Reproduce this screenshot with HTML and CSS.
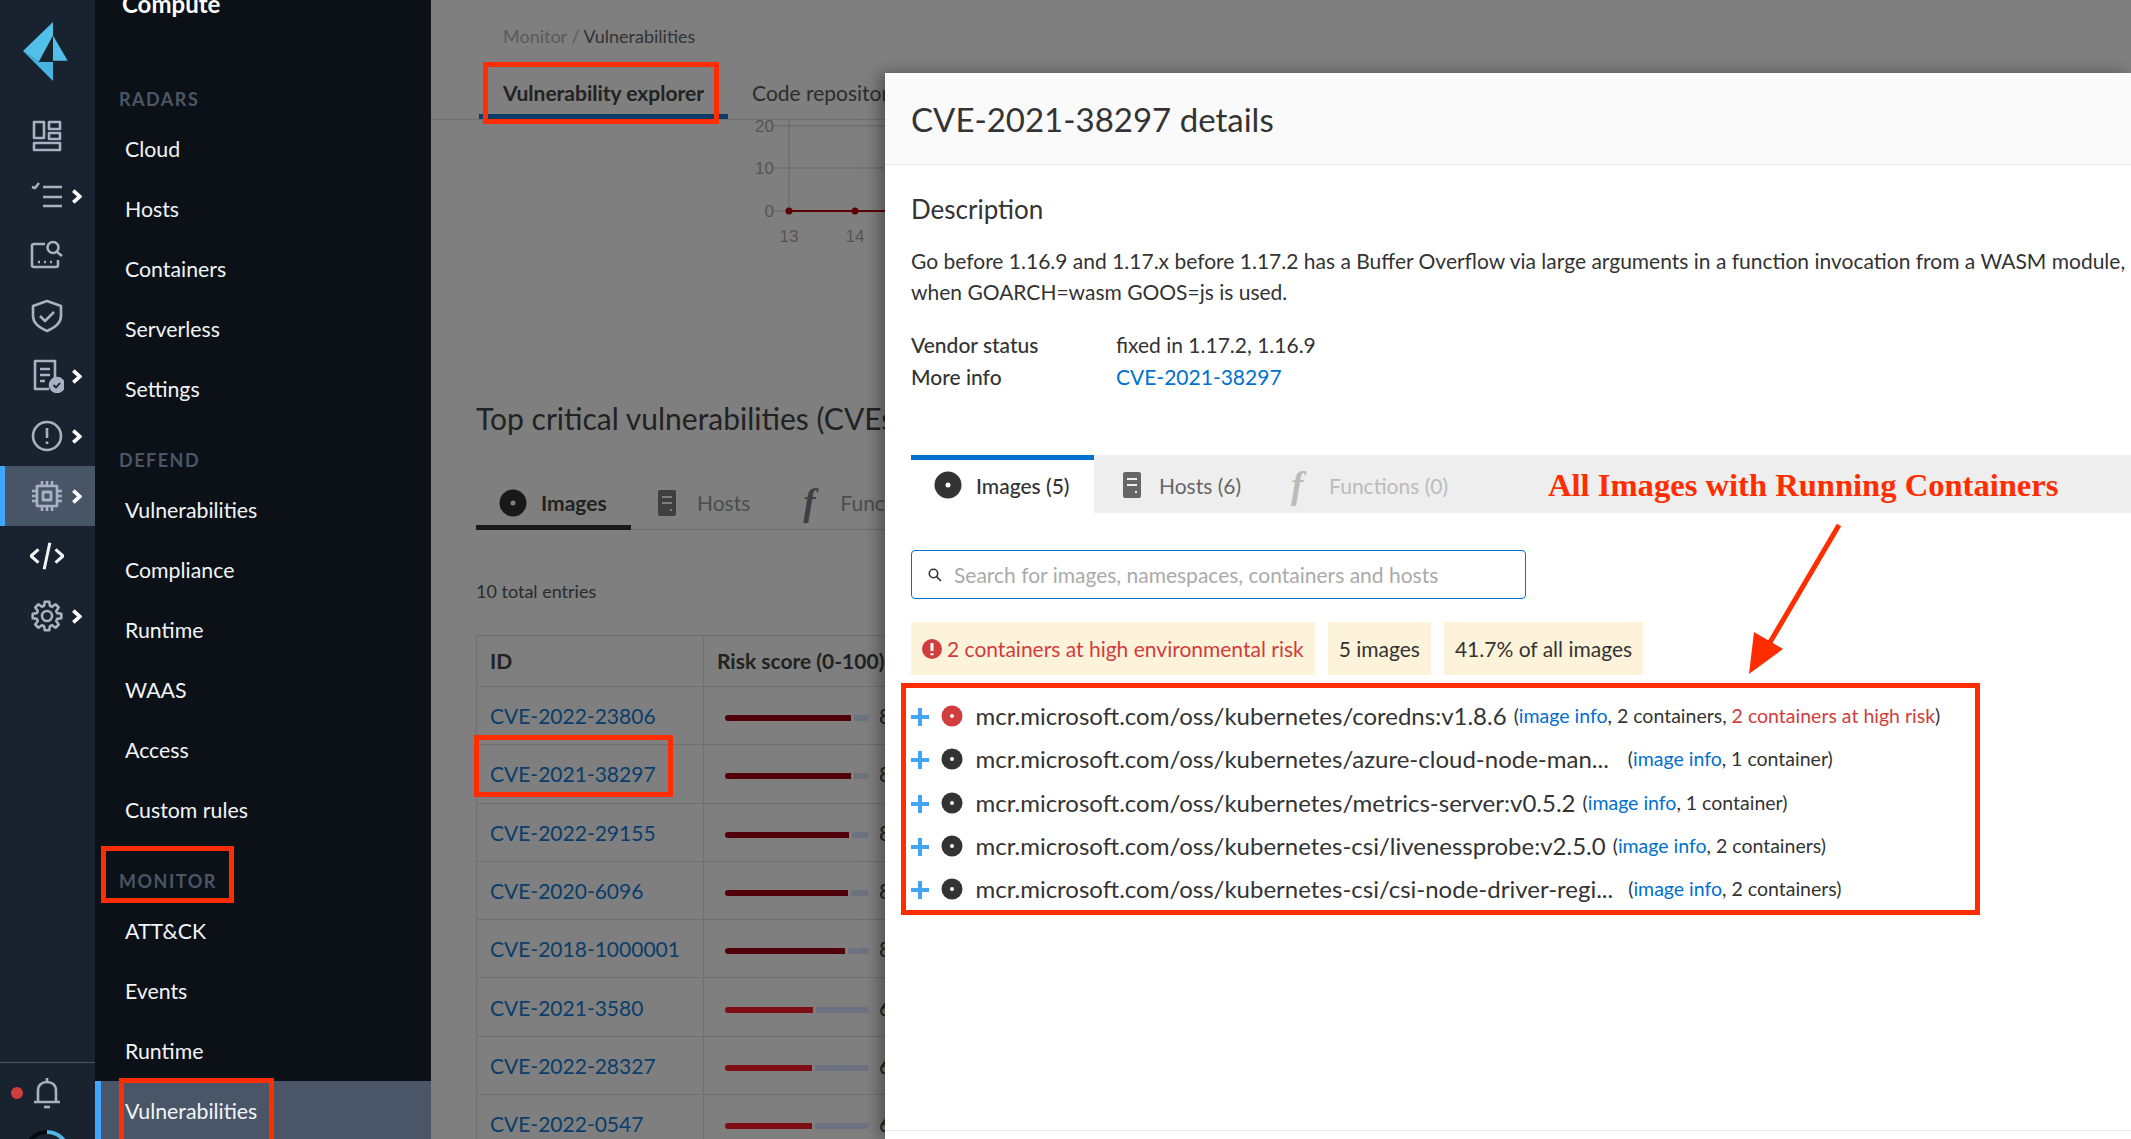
FILE: index.html
```html
<!doctype html>
<html lang="en">

<head>
	<meta charset="UTF-8">
	<title>CVE-2021-38297 details</title>
	<link rel="stylesheet" href="styles.css">
</head>

<body>
	<div class="rail">
		<svg class="logo" width="45" height="59" viewBox="0 0 45 59">
			<polygon points="30,0 0,29 15.7,40 30,13.5" fill="#52bfe8" />
			<polygon points="0,29 15.7,40 30,40 30,59" fill="#45b4e0" />
			<polygon points="30,13.5 44.7,38.7 30,38.7" fill="#52bfe8" />
		</svg>
		<div class="rail-row">
			<svg class="rail-icon" viewBox="0 0 34 34">
				<rect x="4" y="3" width="10" height="16" />
				<rect x="19" y="3" width="11" height="7" />
				<rect x="19" y="14" width="11" height="6" />
				<rect x="4" y="24" width="26" height="7" />
			</svg>
		</div>
		<div class="rail-row">
			<svg class="rail-icon" viewBox="0 0 34 34">
				<path d="M2 8l3 1 4-5M13 8h19M13 18h19M13 27h19" />
			</svg>
			<svg class="chevron" viewBox="0 0 10 14"><path d="M2 1.5L8 7l-6 5.5" /></svg>
		</div>
		<div class="rail-row">
			<svg class="rail-icon" viewBox="0 0 34 34">
				<path d="M15 5H4a2 2 0 0 0-2 2v19a2 2 0 0 0 2 2h22a2 2 0 0 0 2-2v-5M8 23h2M14 23h2M20 23h2" />
				<circle cx="23" cy="8.5" r="5.5" />
				<path d="M27 13l5 4" />
			</svg>
		</div>
		<div class="rail-row">
			<svg class="rail-icon" viewBox="0 0 34 34">
				<path d="M17 2l14 5v10c0 8-7 12-14 15C10 29 3 25 3 17V7z" />
				<path d="M10 17l5 5 9-9" />
			</svg>
		</div>
		<div class="rail-row">
			<svg class="rail-icon" viewBox="0 0 34 34">
				<path d="M19 30H5V2h20v18M10 10h10M10 16h10M10 22h5" />
				<circle class="solid" cx="27" cy="26" r="7" />
				<path class="tick" d="M23.5 26l2.5 2.5 4-4.5" />
			</svg>
			<svg class="chevron" viewBox="0 0 10 14"><path d="M2 1.5L8 7l-6 5.5" /></svg>
		</div>
		<div class="rail-row">
			<svg class="rail-icon" viewBox="0 0 34 34">
				<circle cx="17" cy="17" r="14" />
				<path d="M17 9v10M17 22.5v2.5" />
			</svg>
			<svg class="chevron" viewBox="0 0 10 14"><path d="M2 1.5L8 7l-6 5.5" /></svg>
		</div>
		<div class="rail-row rail-row-active">
			<svg class="rail-icon" viewBox="0 0 34 34">
				<rect x="7" y="7" width="20" height="20" />
				<rect class="solid-outline" x="13" y="13" width="8" height="8" />
				<path d="M12 2v5M17 2v5M22 2v5M12 27v5M17 27v5M22 27v5M2 12h5M2 17h5M2 22h5M27 12h5M27 17h5M27 22h5" />
			</svg>
			<svg class="chevron" viewBox="0 0 10 14"><path d="M2 1.5L8 7l-6 5.5" /></svg>
		</div>
		<div class="rail-row">
			<svg class="rail-icon rail-icon-code" viewBox="0 0 36 34">
				<path d="M9 10l-8 7 8 7M27 10l8 7-8 7M21 3l-6 28" />
			</svg>
		</div>
		<div class="rail-row">
			<svg class="rail-icon" viewBox="0 0 34 34">
				<polygon points="27.09,14.11 31.32,14.73 31.32,19.27 27.09,19.89 26.18,22.09 28.73,25.52 25.52,28.73 22.09,26.18 19.89,27.09 19.27,31.32 14.73,31.32 14.11,27.09 11.91,26.18 8.48,28.73 5.27,25.52 7.82,22.09 6.91,19.89 2.68,19.27 2.68,14.73 6.91,14.11 7.82,11.91 5.27,8.48 8.48,5.27 11.91,7.82 14.11,6.91 14.73,2.68 19.27,2.68 19.89,6.91 22.09,7.82 25.52,5.27 28.73,8.48 26.18,11.91" />
				<circle cx="17" cy="17" r="5" />
			</svg>
			<svg class="chevron" viewBox="0 0 10 14"><path d="M2 1.5L8 7l-6 5.5" /></svg>
		</div>
		<div class="rail-foot">
			<div class="bell-row">
				<span class="bell-dot"></span>
				<svg class="rail-icon" viewBox="0 0 34 34">
					<path d="M8 26V15c0-6 4-9 9-9s9 3 9 9v11M4 26h26M17 2v4" />
					<path d="M14 31h6" />
				</svg>
			</div>
			<svg class="progress" width="50" height="50" viewBox="0 0 50 50">
				<circle cx="25" cy="25" r="21" />
				<path d="M25 4a21 21 0 0 1 21 21" />
			</svg>
		</div>
	</div>

	<div class="nav">
		<div class="nav-top">Compute</div>
		<div class="nav-title">RADARS</div>
		<a class="nav-item">Cloud</a>
		<a class="nav-item">Hosts</a>
		<a class="nav-item">Containers</a>
		<a class="nav-item">Serverless</a>
		<a class="nav-item">Settings</a>
		<div class="nav-title nav-title-gap">DEFEND</div>
		<a class="nav-item">Vulnerabilities</a>
		<a class="nav-item">Compliance</a>
		<a class="nav-item">Runtime</a>
		<a class="nav-item">WAAS</a>
		<a class="nav-item">Access</a>
		<a class="nav-item">Custom rules</a>
		<div class="nav-title nav-title-gap">MONITOR</div>
		<a class="nav-item">ATT&amp;CK</a>
		<a class="nav-item">Events</a>
		<a class="nav-item">Runtime</a>
		<a class="nav-item nav-item-active">Vulnerabilities</a>
	</div>

	<div class="main">
		<div class="breadcrumb">Monitor / <b>Vulnerabilities</b></div>
		<div class="page-tabs">
			<div class="page-tab page-tab-active">Vulnerability explorer</div>
			<div class="page-tab">Code repository</div>
		</div>

		<svg class="chart" width="454" height="128" viewBox="0 0 454 128">
			<path class="chart-grid" d="M358 0V91M343 6H454M343 48H454M343 91H358" />
			<path class="chart-line" d="M358 91H454" />
			<circle class="chart-dot" cx="358" cy="91" r="3.5" />
			<circle class="chart-dot" cx="424" cy="91" r="3.5" />
			<text class="chart-y" x="343" y="12">20</text>
			<text class="chart-y" x="343" y="54">10</text>
			<text class="chart-y" x="343" y="97">0</text>
			<text x="358" y="122">13</text>
			<text x="424" y="122">14</text>
		</svg>

		<h2 class="section-title">Top critical vulnerabilities (CVEs)</h2>

		<div class="sub-tabs">
			<div class="sub-tab sub-tab-active">
				<svg class="disc" viewBox="0 0 28 28"><circle cx="14" cy="14" r="13.5" /><circle class="disc-hole" cx="14" cy="14" r="2.5" /></svg>
				Images
			</div>
			<div class="sub-tab sub-tab-hosts">
				<svg class="server" viewBox="0 0 18 26"><path d="M2 0h14a2 2 0 0 1 2 2v22a2 2 0 0 1-2 2H2a2 2 0 0 1-2-2V2a2 2 0 0 1 2-2z" /><path class="server-cut" d="M4 6h10v2H4zM4 12h10v2H4zM12 19h2v2h-2z" /></svg>
				Hosts
			</div>
			<div class="sub-tab sub-tab-func">
				<span class="func-icon">f</span>
				Functions
			</div>
		</div>

		<div class="entries">10 total entries</div>

		<div class="cve-table">
			<div class="cve-row cve-head">
				<div class="cve-id">ID</div>
				<div class="cve-risk">Risk score (0-100)</div>
			</div>
			<div class="cve-row">
				<div class="cve-id"><a>CVE-2022-23806</a></div>
				<div class="cve-risk"><span class="bar"><span class="fill fill-dark" style="width:126px"></span><span class="track"></span></span>88</div>
			</div>
			<div class="cve-row">
				<div class="cve-id"><a>CVE-2021-38297</a></div>
				<div class="cve-risk"><span class="bar"><span class="fill fill-dark" style="width:126px"></span><span class="track"></span></span>88</div>
			</div>
			<div class="cve-row">
				<div class="cve-id"><a>CVE-2022-29155</a></div>
				<div class="cve-risk"><span class="bar"><span class="fill fill-dark" style="width:124px"></span><span class="track"></span></span>86</div>
			</div>
			<div class="cve-row">
				<div class="cve-id"><a>CVE-2020-6096</a></div>
				<div class="cve-risk"><span class="bar"><span class="fill fill-dark" style="width:123px"></span><span class="track"></span></span>85</div>
			</div>
			<div class="cve-row">
				<div class="cve-id"><a>CVE-2018-1000001</a></div>
				<div class="cve-risk"><span class="bar"><span class="fill fill-dark" style="width:120px"></span><span class="track"></span></span>83</div>
			</div>
			<div class="cve-row">
				<div class="cve-id"><a>CVE-2021-3580</a></div>
				<div class="cve-risk"><span class="bar"><span class="fill fill-mid" style="width:88px"></span><span class="track"></span></span>61</div>
			</div>
			<div class="cve-row">
				<div class="cve-id"><a>CVE-2022-28327</a></div>
				<div class="cve-risk"><span class="bar"><span class="fill fill-mid" style="width:87px"></span><span class="track"></span></span>60</div>
			</div>
			<div class="cve-row">
				<div class="cve-id"><a>CVE-2022-0547</a></div>
				<div class="cve-risk"><span class="bar"><span class="fill fill-mid" style="width:87px"></span><span class="track"></span></span>60</div>
			</div>
		</div>

		<div class="modal">
			<div class="modal-head">CVE-2021-38297 details</div>
			<div class="modal-body">
				<h3 class="modal-h3">Description</h3>
				<p class="modal-text">Go before 1.16.9 and 1.17.x before 1.17.2 has a Buffer Overflow via large arguments in a function invocation from a WASM module,<br>when GOARCH=wasm GOOS=js is used.</p>
				<div class="meta">
					<div class="meta-row"><span class="meta-key">Vendor status</span><span>fixed in 1.17.2, 1.16.9</span></div>
					<div class="meta-row"><span class="meta-key">More info</span><a class="link">CVE-2021-38297</a></div>
				</div>
			</div>

			<div class="modal-tabs">
				<div class="modal-tab modal-tab-active">
					<svg class="disc" viewBox="0 0 28 28"><circle cx="14" cy="14" r="13.5" /><circle class="disc-hole-white" cx="14" cy="14" r="2.5" /></svg>
					Images (5)
				</div>
				<div class="modal-tab modal-tab-plain">
					<svg class="server" viewBox="0 0 18 26"><path d="M2 0h14a2 2 0 0 1 2 2v22a2 2 0 0 1-2 2H2a2 2 0 0 1-2-2V2a2 2 0 0 1 2-2z" /><path class="server-cut-light" d="M4 6h10v2H4zM4 12h10v2H4zM12 19h2v2h-2z" /></svg>
					Hosts (6)
				</div>
				<div class="modal-tab modal-tab-off">
					<span class="func-icon">f</span>
					Functions (0)
				</div>
			</div>

			<div class="search">
				<svg class="search-icon" viewBox="0 0 14 14"><circle cx="5.5" cy="5.5" r="4.2" /><path d="M8.6 8.6L13 13" /></svg>
				<span>Search for images, namespaces, containers and hosts</span>
			</div>

			<div class="badges">
				<div class="badge badge-risk">
					<svg class="warn" viewBox="0 0 20 20"><circle cx="10" cy="10" r="10" /><path d="M10 4v8M10 14.2v2" /></svg>
					2 containers at high environmental risk
				</div>
				<div class="badge">5 images</div>
				<div class="badge">41.7% of all images</div>
			</div>

			<div class="image-list">
				<div class="image-row">
					<svg class="plus" viewBox="0 0 18 18"><path d="M9 0v18M0 9h18" /></svg>
					<svg class="row-disc row-disc-red" viewBox="0 0 22 22"><circle cx="11" cy="11" r="10.5" /><circle class="disc-hole-white" cx="11" cy="11" r="2" /></svg>
					<span class="image-name">mcr.microsoft.com/oss/kubernetes/coredns:v1.8.6</span>
					<span class="image-meta">(<a class="link">image info</a>, 2 containers, <span class="risk-text">2 containers at high risk</span>)</span>
				</div>
				<div class="image-row">
					<svg class="plus" viewBox="0 0 18 18"><path d="M9 0v18M0 9h18" /></svg>
					<svg class="row-disc" viewBox="0 0 22 22"><circle cx="11" cy="11" r="10.5" /><circle class="disc-hole-white" cx="11" cy="11" r="2" /></svg>
					<span class="image-name image-name-cut">mcr.microsoft.com/oss/kubernetes/azure-cloud-node-man...</span>
					<span class="image-meta">(<a class="link">image info</a>, 1 container)</span>
				</div>
				<div class="image-row">
					<svg class="plus" viewBox="0 0 18 18"><path d="M9 0v18M0 9h18" /></svg>
					<svg class="row-disc" viewBox="0 0 22 22"><circle cx="11" cy="11" r="10.5" /><circle class="disc-hole-white" cx="11" cy="11" r="2" /></svg>
					<span class="image-name">mcr.microsoft.com/oss/kubernetes/metrics-server:v0.5.2</span>
					<span class="image-meta">(<a class="link">image info</a>, 1 container)</span>
				</div>
				<div class="image-row">
					<svg class="plus" viewBox="0 0 18 18"><path d="M9 0v18M0 9h18" /></svg>
					<svg class="row-disc" viewBox="0 0 22 22"><circle cx="11" cy="11" r="10.5" /><circle class="disc-hole-white" cx="11" cy="11" r="2" /></svg>
					<span class="image-name">mcr.microsoft.com/oss/kubernetes-csi/livenessprobe:v2.5.0</span>
					<span class="image-meta">(<a class="link">image info</a>, 2 containers)</span>
				</div>
				<div class="image-row">
					<svg class="plus" viewBox="0 0 18 18"><path d="M9 0v18M0 9h18" /></svg>
					<svg class="row-disc" viewBox="0 0 22 22"><circle cx="11" cy="11" r="10.5" /><circle class="disc-hole-white" cx="11" cy="11" r="2" /></svg>
					<span class="image-name image-name-cut-last">mcr.microsoft.com/oss/kubernetes-csi/csi-node-driver-regi...</span>
					<span class="image-meta">(<a class="link">image info</a>, 2 containers)</span>
				</div>
			</div>

			<div class="modal-foot"></div>
		</div>
	</div>

	<!-- red markup drawn over the screenshot -->
	<div class="mark mark-tab"></div>
	<div class="mark mark-cve"></div>
	<div class="mark mark-monitor"></div>
	<div class="mark mark-vuln"></div>
	<div class="mark mark-images"></div>
	<div class="mark-text">All Images with Running Containers</div>
	<svg class="mark-arrow" width="110" height="160" viewBox="0 0 110 160">
		<path d="M100 3L30 122" />
		<polygon points="10,152 15,110 44,127" />
	</svg>
</body>

</html>
```

FILE: styles.css
```css
* {
	padding: 0;
	margin: 0;
	box-sizing: border-box;
}

html,
body {
	height: 100%;
	overflow: hidden;
}

body {
	display: flex;
	position: relative;
	font-family: Lato, "Noto Sans", sans-serif;
	font-size: 21px;
	color: #333;
	background: #7e7f7e;
}

/* icon rail */
.rail {
	width: 95px;
	height: 1139px;
	flex: none;
	display: flex;
	flex-direction: column;
	background: #19222f;
	overflow: hidden;
}

.logo {
	display: block;
	flex: none;
	margin: 22px 0 25px 23px;
}

.rail-row {
	height: 60px;
	flex: none;
	display: flex;
	align-items: center;
	gap: 7px;
	padding-left: 30px;
}

.rail-row-active {
	background: #475566;
	border-left: 5px solid #3ea6ff;
	padding-left: 25px;
}

.rail-icon {
	width: 34px;
	height: 34px;
	flex: none;
	fill: none;
	stroke: #a9b1c0;
	stroke-width: 2.6;
	stroke-linejoin: round;
}

.rail-icon .solid {
	fill: #a9b1c0;
}

.rail-icon .solid-outline {
	stroke-width: 2.8;
}

.rail-icon .tick {
	stroke: #19222f;
	stroke-width: 1.8;
}

.rail-icon-code {
	stroke: #f2f4f7;
	stroke-width: 3.2;
}

.chevron {
	width: 11px;
	height: 15px;
	fill: none;
	stroke: #fff;
	stroke-width: 3.4;
}

.rail-foot {
	margin-top: auto;
	height: 77px;
	flex: none;
	border-top: 1px solid #4a5464;
	overflow: hidden;
}

.bell-row {
	height: 60px;
	display: flex;
	align-items: center;
	padding-left: 30px;
	position: relative;
}

.bell-dot {
	position: absolute;
	left: 11px;
	top: 24px;
	width: 12px;
	height: 12px;
	border-radius: 50%;
	background: #d13c3c;
}

.progress {
	display: block;
	margin: 5px 0 0 22px;
	fill: none;
	stroke-width: 4;
}

.progress circle {
	stroke: #05080c;
}

.progress path {
	stroke: #4fb8e6;
}

/* section nav */
.nav {
	width: 336px;
	height: 1139px;
	flex: none;
	background: #0c1118;
	color: #f2f4f7;
	overflow: hidden;
}

.nav-top {
	height: 34px;
	margin-top: -13px;
	margin-bottom: 56px;
	padding-left: 27px;
	line-height: 34px;
	font-size: 24px;
	font-weight: 700;
	color: #fff;
}

.nav-title {
	height: 42px;
	line-height: 44px;
	padding-left: 24px;
	font-size: 18px;
	font-weight: 700;
	letter-spacing: 1.5px;
	color: #4a5666;
}

.nav-title-gap {
	margin-top: 19px;
}

.nav-item {
	display: block;
	height: 60px;
	line-height: 60px;
	padding-left: 30px;
	font-size: 21.3px;
}

.nav-item-active {
	background: #4a5668;
	border-left: 6px solid #3ea6ff;
	padding-left: 24px;
}

/* dimmed page behind the drawer */
.main {
	flex: 1;
	min-width: 0;
	height: 1139px;
	position: relative;
	overflow: hidden;
	color: #222;
}

.breadcrumb {
	height: 24px;
	line-height: 24px;
	margin-top: 24px;
	padding-left: 72px;
	font-size: 18px;
	color: #5a5a5a;
}

.breadcrumb b {
	font-weight: 400;
	color: #333;
}

.page-tabs {
	height: 72px;
	display: flex;
	align-items: flex-end;
	padding-left: 48px;
	border-bottom: 1px solid #6f7070;
}

.page-tab {
	height: 52px;
	line-height: 52px;
	padding: 0 24px;
	color: #2c2c2c;
}

.page-tab-active {
	font-weight: 700;
	border-bottom: 5px solid #0a3d6b;
	color: #222;
}

.chart {
	display: block;
	font-family: "Liberation Sans", Arial, sans-serif;
	font-size: 17px;
}

.chart text {
	fill: #555;
	text-anchor: middle;
}

.chart .chart-y {
	text-anchor: end;
}

.chart-grid {
	fill: none;
	stroke: #686969;
}

.chart-line {
	fill: none;
	stroke: #5c0008;
	stroke-width: 2;
}

.chart-dot {
	fill: #5c0008;
}

.section-title {
	height: 40px;
	line-height: 40px;
	margin-top: 150px;
	padding-left: 45px;
	font-size: 30px;
	font-weight: 400;
	color: #222;
	white-space: nowrap;
}

.sub-tabs {
	height: 52px;
	margin: 40px 0 0 45px;
	display: flex;
	border-bottom: 1px solid #6a6b6b;
}

.sub-tab {
	display: flex;
	align-items: center;
	height: 52px;
	padding-top: 2px;
	border-bottom: 5px solid transparent;
	color: #4d4d4d;
}

.sub-tab-active {
	width: 155px;
	gap: 14px;
	padding-left: 23px;
	font-weight: 700;
	color: #222;
	border-bottom-color: #191919;
}

.sub-tab-hosts {
	gap: 21px;
	padding: 2px 27px 0;
}

.sub-tab-func {
	gap: 13px;
	padding-left: 26px;
}

.disc {
	width: 28px;
	height: 28px;
	flex: none;
}

.sub-tab .disc {
	fill: #191919;
}

.disc-hole {
	fill: #7e7f7e;
}

.disc-hole-white {
	fill: #fff;
}

.server {
	width: 18px;
	height: 26px;
	flex: none;
}

.sub-tab .server {
	fill: #3f3f3f;
}

.server-cut {
	fill: #7e7f7e;
}

.server-cut-light {
	fill: #eee;
}

.func-icon {
	width: 24px;
	flex: none;
	font-family: "Liberation Serif", serif;
	font-size: 37px;
	font-style: italic;
	font-weight: 700;
	line-height: 1;
}

.sub-tab .func-icon {
	color: #3f3f3f;
}

.entries {
	height: 24px;
	line-height: 24px;
	margin: 49px 0 0 45px;
	font-size: 18px;
	color: #2b2b2b;
}

.cve-table {
	margin: 32px 0 0 45px;
	width: 1100px;
	border-left: 1px solid #6f7070;
	border-top: 1px solid #6f7070;
}

.cve-row {
	height: 58.3px;
	display: grid;
	grid-template-columns: 227px 1fr;
	border-bottom: 1px solid #6f7070;
}

.cve-head {
	height: 51px;
	font-weight: 700;
	padding-bottom: 1px;
}

.cve-id {
	display: flex;
	align-items: center;
	padding-left: 13px;
	border-right: 1px solid #6f7070;
}

.cve-id a {
	color: #0a3d6b;
}

.cve-risk {
	display: flex;
	align-items: center;
	padding-left: 13px;
	color: #222;
}

.bar {
	width: 144px;
	height: 6px;
	margin: 5px 10px 0 8px;
	display: flex;
	gap: 3px;
}

.fill {
	flex: none;
	border-radius: 3px 0 0 3px;
}

.fill-dark {
	background: #4f0008;
}

.fill-mid {
	background: #7f0d14;
}

.track {
	flex: 1;
	border-radius: 0 3px 3px 0;
	background: #6c7280;
}

/* details drawer */
.modal {
	position: absolute;
	left: 454px;
	top: 73px;
	right: 0;
	bottom: 0;
	display: flex;
	flex-direction: column;
	background: #fff;
	box-shadow: -6px 0 14px rgba(0, 0, 0, .35);
	color: #333;
}

.modal-head {
	height: 92px;
	flex: none;
	display: flex;
	align-items: center;
	padding-left: 26px;
	font-size: 33px;
	background: #fafafa;
	border-bottom: 1px solid #e8e8e8;
}

.modal-body {
	padding: 26px 0 0 26px;
}

.modal-h3 {
	height: 36px;
	line-height: 36px;
	font-size: 26px;
	font-weight: 400;
}

.modal-text {
	margin-top: 18px;
	line-height: 31px;
	white-space: nowrap;
}

.meta {
	margin-top: 22px;
}

.meta-row {
	display: flex;
	height: 32px;
	line-height: 32px;
}

.meta-key {
	width: 205px;
	flex: none;
	font-weight: 500;
}

.link {
	color: #0070d0;
}

.modal-tabs {
	height: 58px;
	flex: none;
	margin: 62px 0 0 26px;
	display: flex;
	background: #eee;
}

.modal-tab {
	display: flex;
	align-items: center;
	gap: 18px;
	height: 58px;
	padding-top: 2px;
}

.modal-tab-active {
	width: 183px;
	padding: 0 0 3px 23px;
	gap: 14px;
	font-weight: 500;
	background: #fff;
	border-top: 5px solid #0070d0;
}

.modal-tab .disc {
	fill: #333;
}

.modal-tab-plain {
	padding-left: 29px;
	color: #666;
}

.modal-tab-plain .server {
	fill: #666;
}

.modal-tab-off {
	gap: 14px;
	padding-left: 50px;
	color: #bbb;
}

.search {
	width: 615px;
	height: 49px;
	flex: none;
	margin: 37px 0 0 26px;
	display: flex;
	align-items: center;
	gap: 12px;
	padding-left: 16px;
	border: 1px solid #0070d0;
	border-radius: 4px;
	color: #aaa;
}

.search-icon {
	width: 14px;
	height: 14px;
	fill: none;
	stroke: #333;
	stroke-width: 1.6;
}

.badges {
	height: 53px;
	flex: none;
	margin: 23px 0 0 26px;
	display: flex;
	gap: 13px;
}

.badge {
	display: flex;
	align-items: center;
	gap: 5px;
	padding: 0 11px;
	background: #fdf3da;
}

.badge-risk {
	color: #d13c3c;
}

.warn {
	width: 20px;
	height: 20px;
	fill: #d13c3c;
	stroke: #fff;
	stroke-width: 3;
}

.warn circle {
	stroke: none;
}

.image-list {
	margin-top: 19px;
	padding-left: 26px;
}

.image-row {
	height: 43.3px;
	display: flex;
	align-items: center;
	white-space: nowrap;
}

.plus {
	width: 18px;
	height: 18px;
	flex: none;
	margin-top: 3px;
	fill: none;
	stroke: #42a5f5;
	stroke-width: 4;
}

.row-disc {
	width: 22px;
	height: 22px;
	flex: none;
	margin: 1px 12.5px 0 12px;
	fill: #333;
}

.row-disc-red {
	fill: #d13c3c;
}

.image-name {
	font-size: 24px;
}

.image-name-cut {
	margin-right: 12px;
}

.image-name-cut-last {
	margin-right: 8px;
}

.image-meta {
	margin-left: 7px;
	font-size: 19.5px;
}

.risk-text {
	color: #d13c3c;
}

.modal-foot {
	margin-top: auto;
	height: 9px;
	flex: none;
	border-top: 1px solid #e8e8e8;
}

/* red annotations */
.mark {
	position: absolute;
	border: 5px solid #ff2d00;
}

.mark-tab {
	left: 483px;
	top: 62px;
	width: 236px;
	height: 62px;
}

.mark-cve {
	left: 474px;
	top: 735px;
	width: 199px;
	height: 62px;
}

.mark-monitor {
	left: 101px;
	top: 846px;
	width: 133px;
	height: 57px;
}

.mark-vuln {
	left: 119px;
	top: 1078px;
	width: 155px;
	height: 70px;
}

.mark-images {
	left: 901px;
	top: 683px;
	width: 1079px;
	height: 232px;
}

.mark-text {
	position: absolute;
	left: 1548px;
	top: 467px;
	font-family: "Liberation Serif", serif;
	font-size: 32.6px;
	font-weight: 700;
	line-height: 36px;
	color: #ff2d00;
	white-space: nowrap;
}

.mark-arrow {
	position: absolute;
	left: 1739px;
	top: 522px;
}

.mark-arrow path {
	fill: none;
	stroke: #ff2d00;
	stroke-width: 5;
}

.mark-arrow polygon {
	fill: #ff2d00;
}
```
